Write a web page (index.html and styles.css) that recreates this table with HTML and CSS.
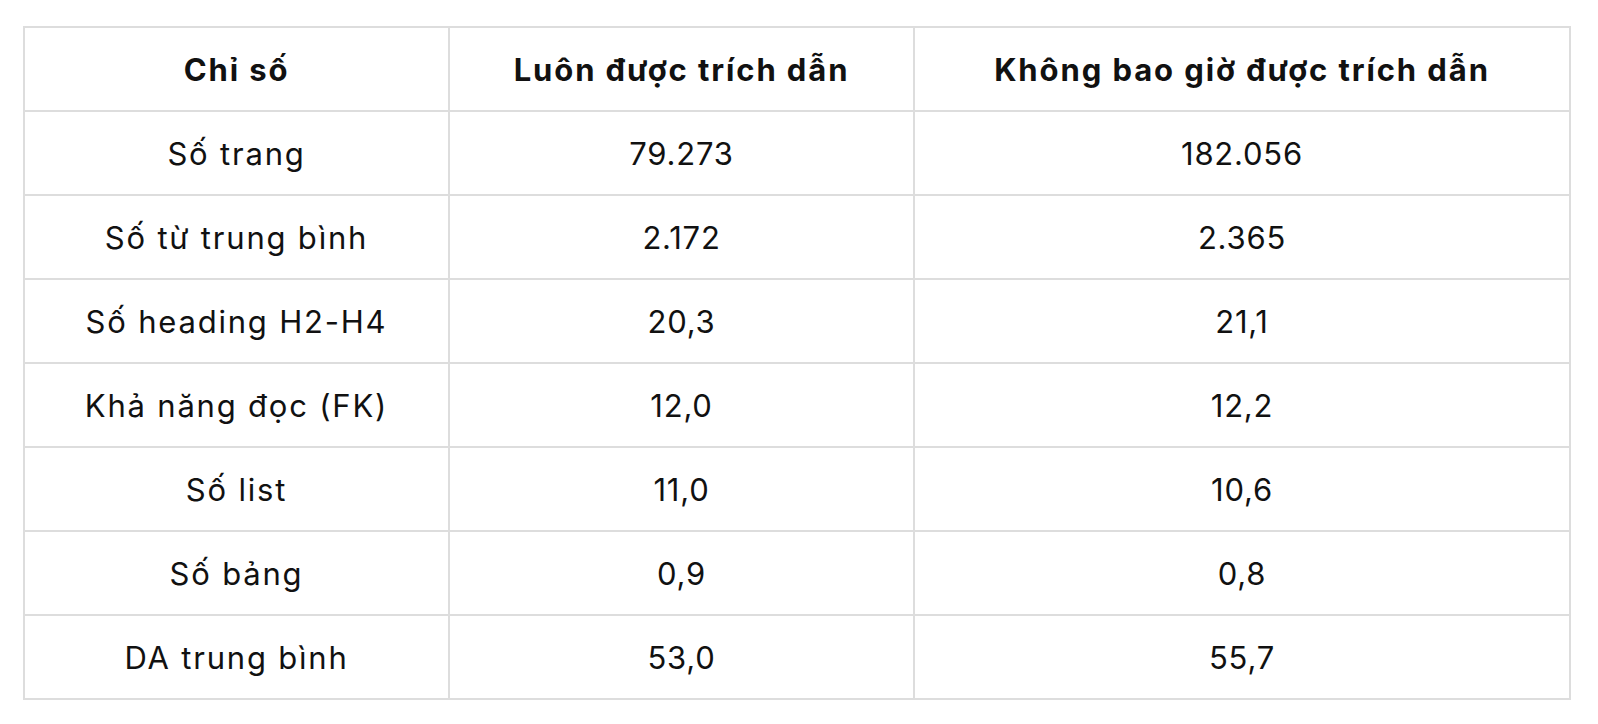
FILE: index.html
```html
<!DOCTYPE html>
<html lang="vi">
<head>
<meta charset="utf-8">
<title>Bảng chỉ số</title>
<link rel="stylesheet" href="styles.css">
</head>
<body>
<div class="page">
<table class="stats">
  <colgroup>
    <col class="c1">
    <col class="c2">
    <col class="c3">
  </colgroup>
  <thead>
    <tr><th>Chỉ số</th><th>Luôn được trích dẫn</th><th>Không bao giờ được trích dẫn</th></tr>
  </thead>
  <tbody>
    <tr><td>Số trang</td><td class="num">79.273</td><td class="num">182.056</td></tr>
    <tr><td>Số từ trung bình</td><td class="num">2.172</td><td class="num">2.365</td></tr>
    <tr><td>Số heading H2-H4</td><td class="num">20,3</td><td class="num">21,1</td></tr>
    <tr><td>Khả năng đọc (FK)</td><td class="num">12,0</td><td class="num">12,2</td></tr>
    <tr><td>Số list</td><td class="num">11,0</td><td class="num">10,6</td></tr>
    <tr><td>Số bảng</td><td class="num">0,9</td><td class="num">0,8</td></tr>
    <tr><td>DA trung bình</td><td class="num">53,0</td><td class="num">55,7</td></tr>
  </tbody>
</table>
</div>
</body>
</html>
```
FILE: styles.css
```css
html, body {
  margin: 0;
  padding: 0;
  background: #ffffff;
}
.page {
  padding: 26px 0 0 23px;
}
.stats {
  border-collapse: collapse;
  table-layout: fixed;
  width: 1546px;
  font-family: Inter, "Liberation Sans", sans-serif;
  font-size: 31px;
  color: #111111;
}
.c1 { width: 425px; }
.c2 { width: 465px; }
.c3 { width: 656px; }
.stats th,
.stats td {
  border: 2px solid #dddddd;
  height: 82px;
  padding: 0;
  text-align: center;
  vertical-align: middle;
}
.stats th {
  font-weight: 700;
  letter-spacing: 1.9px;
}
.stats td {
  font-weight: 400;
  letter-spacing: 1.8px;
}
.stats td.num {
  letter-spacing: 0.8px;
}
```
